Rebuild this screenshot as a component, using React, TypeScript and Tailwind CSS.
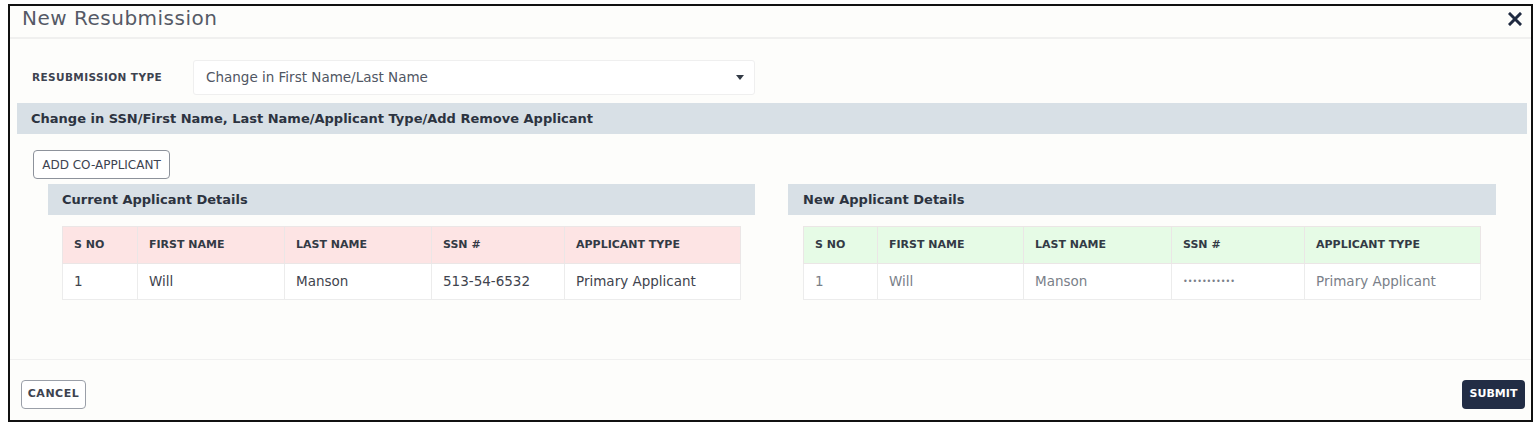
import React from "react";

const font = { fontFamily: '"DejaVu Sans", "Liberation Sans", sans-serif' };

const cols = ["S NO", "FIRST NAME", "LAST NAME", "SSN #", "APPLICANT TYPE"];

function AppTable({
  widths,
  headBg,
  row,
  bodyText,
  masked,
}: {
  widths: number[];
  headBg: string;
  row: string[];
  bodyText: string;
  masked?: boolean;
}) {
  return (
    <table className="border-collapse table-fixed" style={{ width: widths.reduce((a, b) => a + b, 0) }}>
      <colgroup>
        {widths.map((w, i) => (
          <col key={i} style={{ width: w }} />
        ))}
      </colgroup>
      <thead>
        <tr className={headBg}>
          {cols.map((c) => (
            <th
              key={c}
              className="h-[37px] border border-[#ebe6e6] px-[11px] text-left text-[11px] font-bold text-[#333a45]"
            >
              {c}
            </th>
          ))}
        </tr>
      </thead>
      <tbody>
        <tr className="bg-white">
          {row.map((c, i) => (
            <td
              key={i}
              className={`h-[36px] border border-[#ececec] px-[11px] text-left text-[13.5px] ${bodyText}`}
            >
              {masked && i === 3 ? <span className="text-[8px] align-middle">•••••••••••</span> : c}
            </td>
          ))}
        </tr>
      </tbody>
    </table>
  );
}

export default function App() {
  return (
    <div className="w-[1538px] h-[426px] bg-white pt-[4px] pl-[8px]" style={font}>
      <div className="w-[1525px] h-[418px] border-2 border-[#111] bg-[#fdfdfb] flex flex-col">
        {/* header */}
        <div className="h-[33px] border-b-[2px] border-[#f0f0ef] flex items-start justify-between pl-[12px] pr-[9px] pt-[0px]">
          <span className="text-[20px] text-[#555a66] leading-[24px] tracking-[0.5px]">New Resubmission</span>
          <svg width="14" height="14" viewBox="0 0 14 14" className="mt-[6px]">
            <path d="M2 2 L12 12 M12 2 L2 12" stroke="#1f2a40" strokeWidth="3" strokeLinecap="square" />
          </svg>
        </div>

        {/* resubmission type */}
        <div className="flex items-center mt-[21px] pl-[22px]">
          <span className="w-[161px] text-[10.5px] font-semibold text-[#3d4350] tracking-[0.4px]">
            RESUBMISSION TYPE
          </span>
          <div className="w-[562px] h-[35px] border border-[#efefef] rounded-[3px] bg-white flex items-center justify-between pl-[12px] pr-[10px]">
            <span className="text-[13.5px] text-[#505663]">Change in First Name/Last Name</span>
            <svg width="8" height="5" viewBox="0 0 8 5">
              <path d="M0 0 L8 0 L4 5 Z" fill="#333a45" />
            </svg>
          </div>
        </div>

        {/* section band */}
        <div className="mt-[8px] ml-[7px] mr-[4px] h-[31px] bg-[#d8e0e6] flex items-center pl-[14px]">
          <span className="text-[13px] font-semibold text-[#2c3340]">
            Change in SSN/First Name, Last Name/Applicant Type/Add Remove Applicant
          </span>
        </div>

        {/* add co-applicant */}
        <div className="pl-[23px] mt-[16px]">
          <button className="h-[29px] w-[137px] border border-[#8d929b] rounded-[4px] bg-white text-[12px] text-[#3d4350]">
            ADD CO-APPLICANT
          </button>
        </div>

        {/* two panels */}
        <div className="flex mt-[5px] pl-[38px] gap-[33px]">
          <div className="w-[707px]">
            <div className="h-[31px] bg-[#d8e0e6] flex items-center pl-[14px]">
              <span className="text-[13px] font-semibold text-[#2c3340]">Current Applicant Details</span>
            </div>
            <div className="mt-[11px] pl-[14px]">
              <AppTable
                widths={[75, 147, 147, 133, 176]}
                headBg="bg-[#fde4e4]"
                row={["1", "Will", "Manson", "513-54-6532", "Primary Applicant"]}
                bodyText="text-[#3f444e]"
              />
            </div>
          </div>
          <div className="w-[708px]">
            <div className="h-[31px] bg-[#d8e0e6] flex items-center pl-[15px]">
              <span className="text-[13px] font-semibold text-[#2c3340]">New Applicant Details</span>
            </div>
            <div className="mt-[11px] pl-[15px]">
              <AppTable
                widths={[74, 146, 148, 133, 176]}
                headBg="bg-[#e6fbe6]"
                row={["1", "Will", "Manson", "", "Primary Applicant"]}
                bodyText="text-[#7a7f89]"
                masked
              />
            </div>
          </div>
        </div>

        <div className="flex-1" />

        {/* footer */}
        <div className="h-[61px] border-t border-[#f0f0ef] flex justify-between items-start pt-[20px] pl-[11px] pr-[6px]">
          <button className="h-[29px] w-[65px] border border-[#9a9fa8] rounded-[4px] bg-white text-[11px] font-semibold tracking-[0.5px] text-[#3d4350]">
            CANCEL
          </button>
          <button className="h-[29px] w-[63px] rounded-[4px] bg-[#222d45] text-[11px] font-bold text-white">
            SUBMIT
          </button>
        </div>
      </div>
    </div>
  );
}
